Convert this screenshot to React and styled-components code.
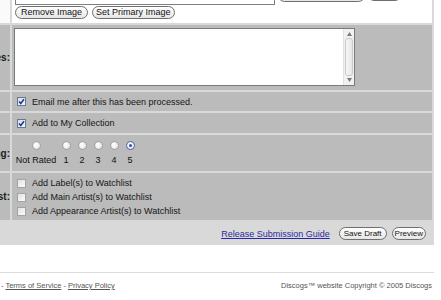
import React from "react";
import styled, { createGlobalStyle } from "styled-components";

const Global = createGlobalStyle`
  html, body { margin: 0; padding: 0; background: #fff; }
  body { font-family: "Liberation Sans", Arial, sans-serif; font-size: 9px; color: #111; overflow: hidden; }
`;

const Page = styled.div`
  width: 434px;
  margin-top: -16px;
`;

const FormGrid = styled.div`
  display: grid;
  grid-template-columns: 10px 1fr;
  gap: 2px;
  padding-right: 2px;
  background: #d9d9d9;
`;

const LabelCell = styled.div`
  display: flex;
  justify-content: flex-end;
  align-items: center;
  overflow: hidden;
  white-space: nowrap;
  font-weight: bold;
  font-size: 10px;
  color: #1a1a1a;
  background: ${(p) => (p.$white ? "#fafafa" : "#bbbbbb")};
`;

const Cell = styled.div`
  background: ${(p) => (p.$white ? "#ffffff" : "#bbbbbb")};
  min-height: ${(p) => p.$h}px;
  padding: ${(p) => p.$pad || "0 0 0 5px"};
  display: flex;
  flex-direction: column;
  justify-content: ${(p) => p.$justify || "center"};
  box-sizing: border-box;
`;

const Line = styled.div`
  display: flex;
  align-items: center;
  gap: ${(p) => p.$gap ?? 4}px;
  height: ${(p) => p.$h}px;
`;

const FileBox = styled.div`
  width: 258px;
  height: 18px;
  border: 1px solid #7f7f7f;
  background: #fff;
`;

const Pill = styled.button`
  font-family: "Liberation Sans", Arial, sans-serif;
  font-size: ${(p) => p.$fs || 9}px;
  color: #111;
  height: ${(p) => p.$h || 13}px;
  padding: 0 ${(p) => p.$px ?? 5}px;
  border: 1px solid #6e6e6e;
  border-radius: 8px;
  background: linear-gradient(#ffffff, #e6e6e6);
  line-height: 1;
  white-space: nowrap;
  cursor: pointer;
  margin: 0;
`;

const TextWrap = styled.div`
  display: flex;
  width: 341px;
  height: 58px;
  border: 1px solid #7a7a7a;
  box-sizing: border-box;
  background: #fff;
`;

const Area = styled.textarea`
  flex: 1;
  border: none;
  resize: none;
  outline: none;
  overflow: hidden;
  margin: 0;
  padding: 2px;
  font-family: "Liberation Sans", Arial, sans-serif;
  font-size: 9px;
`;

const ScrollBar = styled.div`
  width: 11px;
  display: flex;
  flex-direction: column;
  align-items: center;
  background: #f1f1ee;
  border-left: 1px solid #e2e2e2;
  padding: 2px 0;
  box-sizing: border-box;
  gap: 1px;
`;

const Thumb = styled.div`
  flex: 1;
  width: 8px;
  border: 1px solid #c9c9c9;
  border-radius: 3px;
  background: linear-gradient(90deg, #f7f7f7, #e6e6e6);
  box-sizing: border-box;
`;

const Arrow = ({ up }) => (
  <svg width="7" height="6" viewBox="0 0 7 6">
    <path d={up ? "M1 5 L3.5 1 L6 5 Z" : "M1 1 L3.5 5 L6 1 Z"} fill="#7a7a7a" />
  </svg>
);

const CheckRow = styled.label`
  display: flex;
  align-items: center;
  gap: 6px;
  height: ${(p) => p.$h || 14}px;
  font-size: 9px;
  color: #151515;
`;

const Box = styled.span`
  width: 9px;
  height: 9px;
  box-sizing: border-box;
  border: 1px solid ${(p) => (p.$on ? "#6a7890" : "#a0a3a8")};
  background: ${(p) => (p.$on ? "linear-gradient(135deg,#d6dce6,#f5f7fa)" : "linear-gradient(135deg,#e2e2e2,#fbfbfb)")};
  display: inline-flex;
  align-items: center;
  justify-content: center;
  flex: none;
`;

const Check = ({ on }) => (
  <Box $on={on}>
    {on && (
      <svg width="7" height="7" viewBox="0 0 7 7">
        <path d="M1 3.5 L2.8 5.5 L6 1.2" fill="none" stroke="#1f3c94" strokeWidth="1.6" />
      </svg>
    )}
  </Box>
);

const RatingGrid = styled.div`
  display: grid;
  grid-template-columns: 44px repeat(5, 16px);
  grid-template-rows: 9px 11px;
  row-gap: 5px;
  justify-items: center;
  align-items: center;
  margin-left: -3px;
  font-size: 9px;
`;

const Radio = styled.span`
  width: 9px;
  height: 9px;
  border-radius: 50%;
  box-sizing: border-box;
  border: 1px solid ${(p) => (p.$on ? "#4a6aa8" : "#9ca0a8")};
  background: radial-gradient(circle at 40% 40%, #ffffff, #e2e2e2);
  display: inline-flex;
  align-items: center;
  justify-content: center;
  &::after {
    content: "";
    display: ${(p) => (p.$on ? "block" : "none")};
    width: 3px;
    height: 3px;
    border-radius: 50%;
    background: #2a4db0;
  }
`;

const Bar = styled.div`
  grid-column: 1 / span 2;
  height: 23px;
  display: flex;
  align-items: center;
  justify-content: flex-end;
  gap: 5px;
  padding-right: 6px;
  background: #d9d9d9;
`;

const GuideLink = styled.a`
  color: #2a2aa0;
  text-decoration: underline;
  font-size: 9px;
  margin-right: 4px;
`;

const Footer = styled.div`
  margin-top: 27px;
  border-top: 1px solid #dcdcdc;
  display: flex;
  justify-content: space-between;
  padding: 7px 2px 0 1px;
  font-size: 7.5px;
  color: #555;
  line-height: 11px;
`;

const FootLink = styled.a`
  color: #555;
  text-decoration: underline;
`;

export default function App() {
  return (
    <>
      <Global />
      <Page>
        <FormGrid>
          <LabelCell $white />
          <Cell $white $pad="1px 0 3px 3px" $justify="flex-start">
            <Line $h={20} $gap={3}>
              <FileBox />
              <Pill $px={12}>Durchsuchen...</Pill>
              <Pill $fs={8} $px={3} $h={12}>Upload</Pill>
            </Line>
            <Line $h={15} $gap={4}>
              <Pill $px={5}>Remove Image</Pill>
              <Pill $px={3}>Set Primary Image</Pill>
            </Line>
          </Cell>

          <LabelCell>Notes:</LabelCell>
          <Cell $h={65} $pad="0 0 1px 2px">
            <TextWrap>
              <Area defaultValue="" />
              <ScrollBar>
                <Arrow up />
                <Thumb />
                <Arrow />
              </ScrollBar>
            </TextWrap>
          </Cell>

          <LabelCell />
          <Cell $h={19}>
            <CheckRow>
              <Check on /> Email me after this has been processed.
            </CheckRow>
          </Cell>

          <LabelCell />
          <Cell $h={20}>
            <CheckRow>
              <Check on /> Add to My Collection
            </CheckRow>
          </Cell>

          <LabelCell>Rating:</LabelCell>
          <Cell $h={36} $pad="0 0 0 5px">
            <RatingGrid>
              <Radio />
              <Radio />
              <Radio />
              <Radio />
              <Radio />
              <Radio $on />
              <span>Not Rated</span>
              <span>1</span>
              <span>2</span>
              <span>3</span>
              <span>4</span>
              <span>5</span>
            </RatingGrid>
          </Cell>

          <LabelCell>Watchlist:</LabelCell>
          <Cell $h={47} $pad="3px 0 2px 5px" $justify="flex-start">
            <CheckRow>
              <Check /> Add Label(s) to Watchlist
            </CheckRow>
            <CheckRow>
              <Check /> Add Main Artist(s) to Watchlist
            </CheckRow>
            <CheckRow>
              <Check /> Add Appearance Artist(s) to Watchlist
            </CheckRow>
          </Cell>

          <Bar>
            <GuideLink href="#">Release Submission Guide</GuideLink>
            <Pill $fs={8} $px={4}>Save Draft</Pill>
            <Pill $fs={8} $px={2}>Preview</Pill>
          </Bar>
        </FormGrid>

        <Footer>
          <span>
            - <FootLink href="#">Terms of Service</FootLink> - <FootLink href="#">Privacy Policy</FootLink>
          </span>
          <span>Discogs™ website Copyright © 2005 Discogs</span>
        </Footer>
      </Page>
    </>
  );
}
